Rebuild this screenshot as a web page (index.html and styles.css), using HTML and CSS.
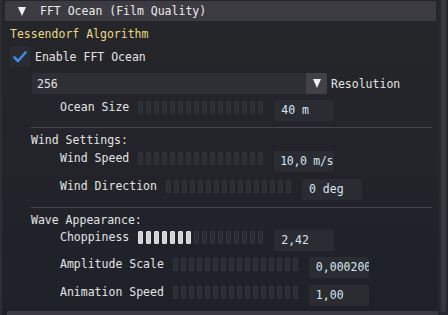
FILE: index.html
```html
<!DOCTYPE html>
<html>
<head>
<meta charset="utf-8">
<link rel="stylesheet" href="styles.css">
</head>
<body>
<div class="panel">
  <div class="scrollbar"><div class="thumb"></div></div>
  <div class="header">
    <span class="tri"></span>
    <span class="title">FFT Ocean (Film Quality)</span>
  </div>
  <div class="yellow">Tessendorf Algorithm</div>
  <div class="check-row">
    <span class="checkbox">
      <svg width="14" height="12" viewBox="0 0 14 12"><path d="M1.5 6.5 L5 10 L12.5 1.5" fill="none" stroke="#3d8be8" stroke-width="2.6" stroke-linecap="round" stroke-linejoin="round"/></svg>
    </span>
    <span class="check-label">Enable FFT Ocean</span>
  </div>
  <div class="combo-row">
    <div class="combo">
      <span class="combo-val">256</span>
      <span class="combo-btn"><span class="tri small"></span></span>
    </div>
    <span class="combo-label">Resolution</span>
  </div>

  <div class="row r-ocean">
    <span class="label">Ocean Size</span>
    <div class="slider"></div>
    <div class="value">40 m</div>
  </div>
  <div class="sep s1"></div>
  <div class="section s-wind">Wind Settings:</div>
  <div class="row r-wspeed">
    <span class="label">Wind Speed</span>
    <div class="slider"></div>
    <div class="value tight">10,0 m/s</div>
  </div>
  <div class="row r-wdir">
    <span class="label">Wind Direction</span>
    <div class="slider"></div>
    <div class="value">0 deg</div>
  </div>
  <div class="sep s2"></div>
  <div class="section s-wave">Wave Appearance:</div>
  <div class="row r-chop">
    <span class="label">Choppiness</span>
    <div class="slider chop"></div>
    <div class="value">2,42</div>
  </div>
  <div class="row r-amp">
    <span class="label">Amplitude Scale</span>
    <div class="slider"></div>
    <div class="value">0,000200</div>
  </div>
  <div class="row r-anim">
    <span class="label">Animation Speed</span>
    <div class="slider"></div>
    <div class="value">1,00</div>
  </div>
  <div class="bottom"></div>
</div>
<script>
document.querySelectorAll('.slider').forEach(function(s){
  var fill = s.classList.contains('chop') ? 7 : 0;
  for (var i = 0; i < 16; i++) {
    var seg = document.createElement('span');
    seg.className = 'seg' + (i < fill ? ' on' : '');
    s.appendChild(seg);
  }
});
</script>
</body>
</html>
```
FILE: styles.css
```css
html, body {
  margin: 0;
  padding: 0;
  background: #232428;
}
body {
  font-family: "DejaVu Sans Mono", "Liberation Mono", monospace;
  font-size: 11.5px;
  color: #e4e4e4;
  width: 448px;
  height: 315px;
  overflow: hidden;
}
.panel {
  position: relative;
  width: 448px;
  height: 315px;
  box-sizing: border-box;
  padding-top: 1px;
  display: flex;
  flex-direction: column;
  background: linear-gradient(#252629 0%, #23252a 35%, #1f2129 100%);
  border-left: 2px solid #2d2e33;
}
.scrollbar {
  position: absolute;
  right: 0;
  top: 0;
  width: 10px;
  height: 315px;
  background: #26272c;
}
.thumb {
  margin: 0 2px 0 3px;
  height: 312px;
  background: #36373d;
  border-radius: 0 0 2px 2px;
}
.header {
  margin-left: 3px;
  width: 431px;
  height: 21px;
  background: #3b3b41;
  border-radius: 2px;
  display: flex;
  align-items: center;
  line-height: 14px;
}
.tri {
  width: 0;
  height: 0;
  border-left: 4.5px solid transparent;
  border-right: 4.5px solid transparent;
  border-top: 9px solid #f0f0f0;
  margin-left: 13px;
}
.title {
  margin-left: 14px;
  color: #ececec;
}
.yellow {
  margin-top: 6px;
  padding-left: 8px;
  line-height: 14px;
  color: #ead985;
}
.check-row {
  margin-top: 5px;
  height: 21px;
  display: flex;
  align-items: center;
  padding-left: 8px;
}
.checkbox {
  width: 20px;
  height: 21px;
  background: #2a2b30;
  border-radius: 2px;
  display: flex;
  align-items: center;
  justify-content: center;
}
.check-label {
  margin-left: 5px;
  line-height: 14px;
}
.combo-row {
  margin-top: 6px;
  height: 21px;
  display: flex;
  align-items: center;
  padding-left: 30px;
}
.combo {
  width: 295px;
  height: 21px;
  background: #2e2f34;
  border-radius: 2px;
  display: flex;
  align-items: center;
}
.combo-val {
  flex: 1;
  padding-left: 5px;
  line-height: 14px;
}
.combo-btn {
  width: 21px;
  height: 21px;
  background: #414147;
  border-radius: 0 2px 2px 0;
  display: flex;
  align-items: center;
  justify-content: center;
}
.tri.small {
  margin-left: 0;
}
.combo-label {
  margin-left: 4px;
  line-height: 14px;
}
.row {
  height: 21px;
  display: flex;
  align-items: flex-start;
  padding-left: 58px;
}
.label {
  line-height: 14px;
  white-space: nowrap;
}
.slider {
  margin-left: 9px;
  margin-top: 1px;
  width: 126px;
  height: 13px;
  display: flex;
  gap: 3px;
  flex: none;
}
.seg {
  width: 5px;
  height: 13px;
  box-sizing: border-box;
  background: #2c2d32;
  border: 1px solid #34353b;
  border-radius: 1px;
}
.seg.on {
  background: #d2d2d4;
  border-color: #e0e0e2;
}
.value {
  margin-left: 10px;
  width: 60px;
  height: 21px;
  box-sizing: border-box;
  padding-left: 7px;
  background: #2b2c31;
  border-radius: 2px;
  line-height: 21px;
  color: #d4e6f2;
  white-space: nowrap;
  overflow: hidden;
  flex: none;
}
.value.tight {
  padding-left: 6px;
  letter-spacing: -0.3px;
}
.r-ocean { margin-top: 6px; }
.sep {
  margin-left: 29px;
  width: 401px;
  height: 1px;
  background: #46474d;
}
.s1 { margin-top: 6px; }
.s2 { margin-top: 7px; }
.section {
  padding-left: 29px;
  line-height: 14px;
  margin-top: 5px;
}
.r-wspeed { margin-top: 4px; }
.r-wdir { margin-top: 7px; }
.r-chop { margin-top: 3px; }
.r-amp { margin-top: 6px; }
.r-anim { margin-top: 7px; }
.bottom {
  margin-top: 5px;
  margin-left: 5px;
  width: 431px;
  height: 4px;
  background: #3a3a40;
}
```
